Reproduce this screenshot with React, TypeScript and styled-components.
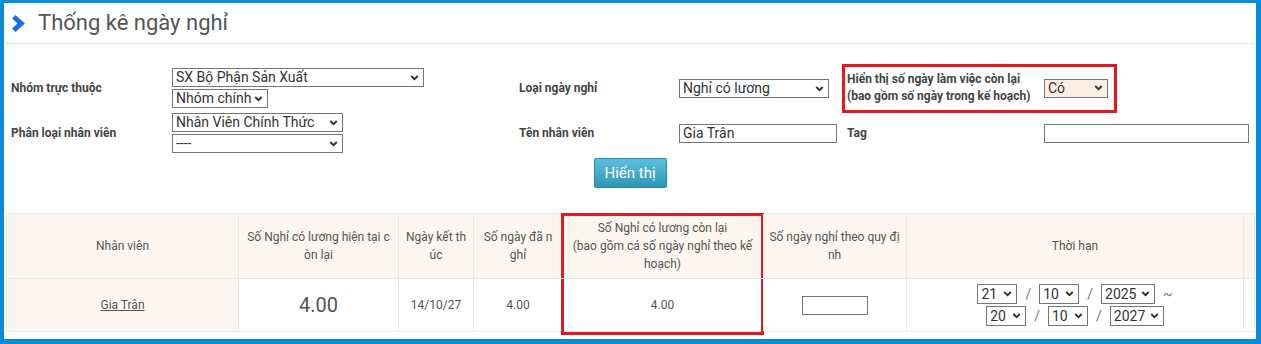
import React from 'react';
import styled, { createGlobalStyle } from 'styled-components';

const GlobalStyle = createGlobalStyle`
    html, body {
        margin: 0;
        padding: 0;
        background: #ffffff;
        font-family: Roboto, "Liberation Sans", Arial, sans-serif;
    }
`;

const red = '#e3191f';
const peach = '#fdf5ef';
const arrow =
    "url(\"data:image/svg+xml,%3Csvg xmlns='http://www.w3.org/2000/svg' width='10' height='7' viewBox='0 0 10 7'%3E%3Cpath d='M1.2 1.2 L5 5 L8.8 1.2' fill='none' stroke='%233a3122' stroke-width='2.2'/%3E%3C/svg%3E\")";

const Frame = styled.div`
    box-sizing: border-box;
    width: 1261px;
    height: 344px;
    border-style: solid;
    border-color: #0a8cdc;
    border-width: 3px 5px 5px 4px;
    background: #fff;
    overflow: hidden;
`;

const Header = styled.div`
    display: flex;
    align-items: center;
    gap: 13px;
    height: 40px;
    margin: 0 2px;
    padding-left: 6px;
    border-bottom: 1px dotted #c9c9c9;
`;

const Title = styled.h1`
    margin: 0;
    font-size: 22px;
    font-weight: 400;
    line-height: 1;
    color: #555;
`;

const FormGrid = styled.div`
    display: grid;
    grid-template-columns: 161px 347px 160px 163px 1fr;
    row-gap: 5px;
    align-items: center;
    margin-top: 24px;
    padding: 0 6px 0 7px;
`;

const Label = styled.div<{ $w?: number }>`
    font-size: 12px;
    font-weight: 700;
    line-height: 17px;
    color: #444;
    ${(p) => (p.$w ? `width: ${p.$w}px; flex: none;` : '')}
`;

const Stack = styled.div`
    display: flex;
    flex-direction: column;
    align-items: flex-start;
    gap: 2px;
`;

const Pair = styled.div<{ $mark?: boolean }>`
    position: relative;
    display: flex;
    align-items: center;
    padding-left: 5px;

    ${(p) =>
        p.$mark &&
        `&::after {
            content: '';
            position: absolute;
            left: 0;
            top: -7px;
            width: 275px;
            bottom: -8px;
            box-sizing: border-box;
            border: 3px solid ${red};
            pointer-events: none;
        }`}
`;

const Select = styled.select<{ $w: number; $h?: number; $tint?: boolean }>`
    box-sizing: border-box;
    appearance: none;
    width: ${(p) => p.$w}px;
    height: ${(p) => p.$h || 19}px;
    padding: 0 14px 0 3px;
    border: 1px solid #767676;
    border-radius: 0;
    background: ${(p) => (p.$tint ? '#fdeee4' : '#fff')} ${arrow} no-repeat right 4px center / 9px 6px;
    font-family: Roboto, "Liberation Sans", Arial, sans-serif;
    font-size: 14px;
    line-height: 17px;
    color: #333;
`;

const TextInput = styled.input<{ $w: number }>`
    box-sizing: border-box;
    width: ${(p) => p.$w}px;
    height: 19px;
    padding: 0 3px;
    border: 1px solid #767676;
    border-radius: 0;
    font-family: Roboto, "Liberation Sans", Arial, sans-serif;
    font-size: 14px;
    color: #333;
`;

const ButtonRow = styled.div`
    display: flex;
    justify-content: center;
    margin-top: 5px;
`;

const ShowButton = styled.button`
    width: 73px;
    height: 30px;
    border: 1px solid #2b8aaa;
    border-radius: 2px;
    background: linear-gradient(#5bc0de, #2f96b4);
    color: #fff;
    font-family: Roboto, "Liberation Sans", Arial, sans-serif;
    font-size: 15px;
    cursor: pointer;
`;

const Table = styled.table`
    width: 1248px;
    margin: 25px 0 0 2px;
    border-collapse: collapse;
    table-layout: fixed;
    font-size: 12px;
    color: #555;
`;

const Th = styled.th<{ $mark?: boolean; $pad?: number }>`
    position: relative;
    height: 64px;
    padding: 0 ${(p) => p.$pad ?? 8}px;
    border: 1px solid #e8e8e8;
    background: ${peach};
    font-weight: 400;
    line-height: 18px;
    text-align: center;
    vertical-align: middle;
    word-break: break-all;

    ${(p) =>
        p.$mark &&
        `&::after {
            content: '';
            position: absolute;
            left: -2px;
            right: -2px;
            top: -1px;
            bottom: 0;
            border: 3px solid ${red};
            border-bottom: none;
            pointer-events: none;
        }`}
`;

const Td = styled.td<{ $mark?: boolean; $tint?: boolean }>`
    position: relative;
    height: 52px;
    padding: 0 4px;
    border: 1px solid #e8e8e8;
    background: ${(p) => (p.$tint ? peach : '#fff')};
    text-align: center;
    vertical-align: middle;

    ${(p) =>
        p.$mark &&
        `&::after {
            content: '';
            position: absolute;
            left: -2px;
            right: -2px;
            top: 0;
            bottom: -4px;
            border: 3px solid ${red};
            border-top: none;
            pointer-events: none;
        }`}
`;

const NameLink = styled.a`
    color: #555;
    text-decoration: underline;
`;

const BigNumber = styled.span`
    font-size: 20px;
    color: #555;
`;

const DateStack = styled.div`
    display: flex;
    flex-direction: column;
    align-items: center;
    gap: 2px;
`;

const DateLine = styled.div`
    display: flex;
    align-items: center;
    gap: 8px;
    font-size: 14px;
    color: #777;
`;

const Chevron = () => (
    <svg width="13" height="17" viewBox="0 0 13 17">
        <polygon points="0,3.5 3.5,0 13,8.5 3.5,17 0,13.5 5.5,8.5" fill="#1a6fe0" />
    </svg>
);

const columns = [232, 160, 75, 89, 200, 144, 337, 11];

export default function App() {
    return (
        <>
            <GlobalStyle />
            <Frame>
                <Header>
                    <Chevron />
                    <Title>Thống kê ngày nghỉ</Title>
                </Header>

                <FormGrid>
                    <Label>Nhóm trực thuộc</Label>
                    <Stack>
                        <Select $w={252} defaultValue="sx">
                            <option value="sx">SX Bộ Phận Sản Xuất</option>
                        </Select>
                        <Select $w={96} defaultValue="main">
                            <option value="main">Nhóm chính</option>
                        </Select>
                    </Stack>
                    <Label>Loại ngày nghỉ</Label>
                    <div>
                        <Select $w={150} defaultValue="paid">
                            <option value="paid">Nghỉ có lương</option>
                        </Select>
                    </div>
                    <Pair $mark>
                        <Label $w={197}>
                            Hiển thị số ngày làm việc còn lại
                            <br />
                            (bao gồm số ngày trong kế hoạch)
                        </Label>
                        <Select $w={64} $tint defaultValue="yes">
                            <option value="yes">Có</option>
                        </Select>
                    </Pair>

                    <Label>Phân loại nhân viên</Label>
                    <Stack>
                        <Select $w={171} defaultValue="official">
                            <option value="official">Nhân Viên Chính Thức</option>
                        </Select>
                        <Select $w={171} defaultValue="none">
                            <option value="none">----</option>
                        </Select>
                    </Stack>
                    <Label>Tên nhân viên</Label>
                    <div>
                        <TextInput $w={158} defaultValue="Gia Trân" />
                    </div>
                    <Pair>
                        <Label $w={197}>Tag</Label>
                        <TextInput $w={205} />
                    </Pair>
                </FormGrid>

                <ButtonRow>
                    <ShowButton>Hiển thị</ShowButton>
                </ButtonRow>

                <Table>
                    <colgroup>
                        {columns.map((w, i) => (
                            <col key={i} style={{ width: w }} />
                        ))}
                    </colgroup>
                    <thead>
                        <tr>
                            <Th>Nhân viên</Th>
                            <Th $pad={7}>Số Nghỉ có lương hiện tại còn lại</Th>
                            <Th $pad={6}>Ngày kết thúc</Th>
                            <Th>Số ngày đã nghỉ</Th>
                            <Th $mark>
                                Số Nghỉ có lương còn lại
                                <br />
                                (bao gồm cá số ngày nghỉ theo kế hoạch)
                            </Th>
                            <Th $pad={4}>Số ngày nghỉ theo quy định</Th>
                            <Th>Thời hạn</Th>
                            <Th $pad={0} />
                        </tr>
                    </thead>
                    <tbody>
                        <tr>
                            <Td $tint>
                                <NameLink href="#">Gia Trân</NameLink>
                            </Td>
                            <Td>
                                <BigNumber>4.00</BigNumber>
                            </Td>
                            <Td>14/10/27</Td>
                            <Td>4.00</Td>
                            <Td $mark>4.00</Td>
                            <Td>
                                <TextInput $w={66} />
                            </Td>
                            <Td>
                                <DateStack>
                                    <DateLine>
                                        <Select $w={40} $h={20} defaultValue="21">
                                            <option value="21">21</option>
                                        </Select>
                                        <span>/</span>
                                        <Select $w={40} $h={20} defaultValue="10">
                                            <option value="10">10</option>
                                        </Select>
                                        <span>/</span>
                                        <Select $w={54} $h={20} defaultValue="2025">
                                            <option value="2025">2025</option>
                                        </Select>
                                        <span>~</span>
                                    </DateLine>
                                    <DateLine>
                                        <Select $w={40} $h={20} defaultValue="20">
                                            <option value="20">20</option>
                                        </Select>
                                        <span>/</span>
                                        <Select $w={40} $h={20} defaultValue="10">
                                            <option value="10">10</option>
                                        </Select>
                                        <span>/</span>
                                        <Select $w={54} $h={20} defaultValue="2027">
                                            <option value="2027">2027</option>
                                        </Select>
                                    </DateLine>
                                </DateStack>
                            </Td>
                            <Td />
                        </tr>
                    </tbody>
                </Table>
            </Frame>
        </>
    );
}
